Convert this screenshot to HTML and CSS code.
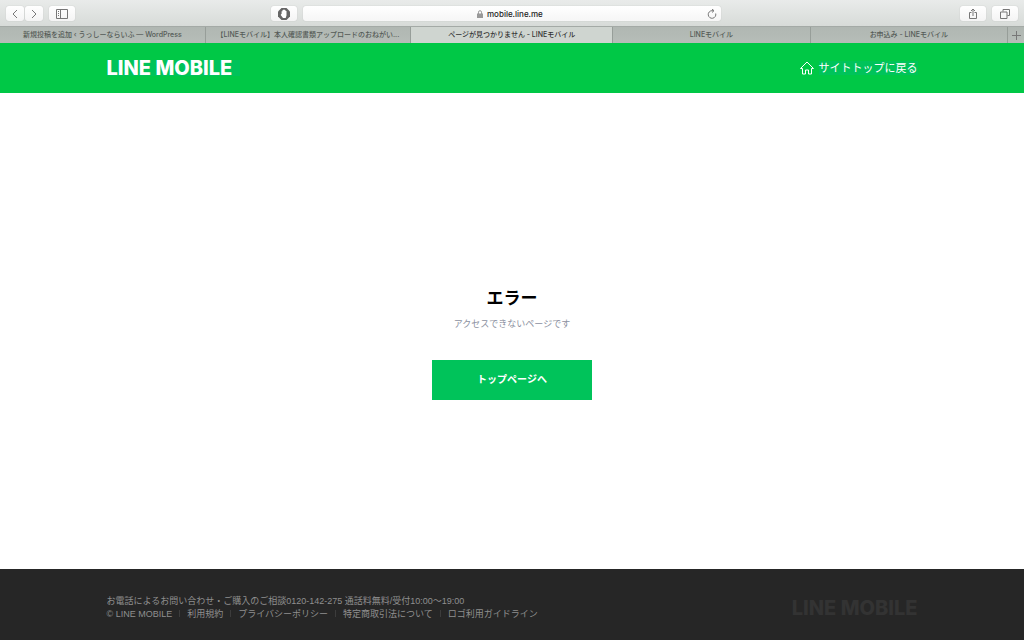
FILE: index.html
```
<!doctype html>

<html lang="ja">

<head>
	<meta charset="utf-8">
	<meta name="viewport" content="width=device-width, initial-scale=1.0">
	<title>ページが見つかりません - LINEモバイル</title>
	<link rel="stylesheet" href="styles.css">
</head>

<body>
	<div class="toolbar">
		<div class="tools">
			<div class="history">
				<button type="button" aria-label="戻る">
					<svg width="8" height="10" viewBox="0 0 8 10"><path d="M6 1 2 5l4 4" /></svg>
				</button>
				<button type="button" aria-label="進む">
					<svg width="8" height="10" viewBox="0 0 8 10"><path d="m2 1 4 4-4 4" /></svg>
				</button>
			</div>
			<button type="button" aria-label="サイドバー">
				<svg width="12" height="10" viewBox="0 0 12 10"><path d="M.5.5h11v9H.5zM4.500.5v9M2 2.500h1M2 4.500h1M2 6.500h1" /></svg>
			</button>
			<button type="button" class="blocker" aria-label="広告ブロック">
				<svg width="12" height="12" viewBox="0 0 12 12">
					<path class="solid" d="M3.500 0h5L12 3.500v5L8.500 12h-5L0 8.500v-5z" />
					<path class="hand" d="M3.600 6V3.200h.9V2h1V1.500h1V2h1v1h1v4.500L7.700 10H5L2.700 7l.5-.9z" />
				</svg>
			</button>
		</div>
		<div class="address">
			<label class="lock" for="url" aria-label="アドレス">
				<svg width="6" height="8" viewBox="0 0 6 8"><path d="M1.500 4V2.200a1.500 1.500 0 0 1 3 0V4" /><path class="solid" d="M0 3.500h6V8H0z" /></svg>
			</label>
			<input id="url" type="text" value="mobile.line.me">
			<button type="button" class="reload" aria-label="再読み込み">
				<svg width="10" height="10" viewBox="0 0 10 10"><path d="M8.700 4.500A3.800 3.800 0 1 1 5 1.700h1.500M5 0l2 1.700-2 1.800" /></svg>
			</button>
		</div>
		<div class="tools tools-right">
			<button type="button" aria-label="共有">
				<svg width="10" height="12" viewBox="0 0 10 12"><path d="M3.500 4.500h-2v6h7v-6h-2M5 8V1M3 3l2-2 2 2" /></svg>
			</button>
			<button type="button" aria-label="タブ一覧">
				<svg width="10" height="10" viewBox="0 0 10 10"><path d="M3 2.500v-2h6.500v6h-2M.5 3h6.500v6.500H.5z" /></svg>
			</button>
		</div>
	</div>

	<nav class="tabs">
		<a class="tab wide" href="#">新規投稿を追加 ‹ うっしーならいふ — WordPress</a>
		<a class="tab wide" href="#">【LINEモバイル】本人確認書類アップロードのおねがい...</a>
		<a class="tab active" href="#">ページが見つかりません - LINEモバイル</a>
		<a class="tab" href="#">LINEモバイル</a>
		<a class="tab" href="#">お申込み - LINEモバイル</a>
		<button type="button" class="new-tab" aria-label="新規タブ">
			<svg width="9" height="9" viewBox="0 0 9 9"><path d="M4.500 0v9M0 4.500h9" /></svg>
		</button>
	</nav>

	<header class="header">
		<div class="container">
			<a class="logo" href="#">LINE MOBILE</a>
			<a class="home" href="#">
				<svg width="14" height="14" viewBox="0 0 14 14"><path d="M.5 7.500 7 1l6.500 6.500h-2v5.500h-3V9h-3v4h-3V7.500z" /></svg>
				<span>サイトトップに戻る</span>
			</a>
		</div>
	</header>

	<main class="error">
		<h1>エラー</h1>
		<p>アクセスできないページです</p>
		<a class="btn" href="#">トップページへ</a>
	</main>

	<footer class="footer">
		<div class="container">
			<div>
				<p>お電話によるお問い合わせ・ご購入のご相談0120-142-275 通話料無料/受付10:00〜19:00</p>
				<ul>
					<li>© LINE MOBILE</li>
					<li><a href="#">利用規約</a></li>
					<li><a href="#">プライバシーポリシー</a></li>
					<li><a href="#">特定商取引法について</a></li>
					<li><a href="#">ロゴ利用ガイドライン</a></li>
				</ul>
			</div>
			<span class="logo">LINE MOBILE</span>
		</div>
	</footer>
</body>

</html>
```
FILE: styles.css
```
html {
	box-sizing: border-box;
	font-family: "Liberation Sans", "Noto Sans CJK JP", sans-serif;
}

*,
*:before,
*:after {
	box-sizing: inherit;
}

body,
h1,
p,
ul {
	margin: 0;
	padding: 0;
}

body {
	display: flex;
	flex-direction: column;
	min-height: 100vh;
	background: #fff;
}

a {
	color: inherit;
	text-decoration: none;
}

button {
	display: flex;
	align-items: center;
	justify-content: center;
	padding: 0;
	border: 0;
	background: none;
	color: #777;
}

svg {
	display: block;
	flex-shrink: 0;
	fill: none;
	stroke: currentColor;
}

svg .solid {
	fill: currentColor;
	stroke: none;
}

/* browser bar */
.toolbar {
	display: grid;
	grid-template-columns: 291fr 418fr 291fr;
	gap: 6px;
	align-items: center;
	height: 26px;
	padding: 1px 6px 0;
	background: linear-gradient(#e9ebea, #d7dbd8);
}

.tools {
	display: flex;
	gap: 6px;
}

.tools button {
	width: 26px;
	height: 15px;
	border-radius: 3px;
	background: linear-gradient(#fff, #f4f4f4);
	box-shadow: 0 0 1px #aaa;
}

.tools .history {
	display: flex;
	gap: 1px;
}

.tools .history button {
	width: 18px;
}

.tools .blocker {
	margin-left: auto;
	color: #666;
}

.blocker .hand {
	fill: #fff;
	stroke: none;
}

.tools-right {
	justify-content: flex-end;
}

.address {
	display: grid;
	grid-template-columns: 1fr auto 1fr;
	align-items: center;
	gap: 4px;
	height: 15px;
	padding: 0 4px 0 14px;
	border-radius: 3px;
	background: linear-gradient(#fff, #f6f6f6);
	box-shadow: 0 0 1px #aaa;
}

.address input {
	width: 60px;
	padding: 0;
	border: 0;
	outline: 0;
	background: none;
	color: #222;
	font: 500 8px Inter, sans-serif;
}

.lock {
	justify-self: end;
	color: #999;
}

.reload {
	justify-self: end;
}

.tabs {
	display: flex;
	height: 17px;
	border-top: 1px solid #a4aaa6;
	background: linear-gradient(#b0b7b2, #b6bdb8);
	color: #555b57;
	font: 500 7px/16px Inter, "Noto Sans CJK JP", sans-serif;
}

.tab {
	flex: 197 1 0;
	min-width: 0;
	padding: 0 8px;
	border-right: 1px solid #979e99;
	overflow: hidden;
	text-align: center;
	text-overflow: ellipsis;
	white-space: nowrap;
}

.tab.wide {
	flex-grow: 206;
}

.tab.active {
	flex-grow: 202;
	background: #cfd5d0;
	color: #333;
}

.new-tab {
	width: 16px;
}

/* page */
.container {
	display: flex;
	align-items: center;
	justify-content: space-between;
	width: 100%;
	max-width: 843px;
	margin: 0 auto;
	padding: 0 16px;
}

.logo {
	font: 800 20px/16px Inter, sans-serif;
}

.header {
	display: flex;
	height: 50px;
	background: #00c846;
	color: #fff;
}

.header .logo {
	padding-right: 8px;
	background: #00c35a;
}

.home {
	display: flex;
	align-items: center;
	gap: 5px;
	font-size: 11px;
	line-height: 14px;
}

.home span {
	background: #00c35a;
}

.error {
	display: flex;
	flex: 1;
	flex-direction: column;
	align-items: center;
	justify-content: center;
	padding-top: 24px;
}

.error h1 {
	color: #000;
	font-size: 17px;
	line-height: 26px;
}

.error p {
	margin: 5px 0 29px;
	color: #8b90a0;
	font-size: 9px;
	line-height: 14px;
}

.btn {
	width: 160px;
	background: #00c35a;
	color: #fff;
	font-size: 10px;
	font-weight: bold;
	line-height: 40px;
	text-align: center;
}

.footer {
	padding: 26px 0 19px;
	background: #262626;
	color: #8f8f8f;
	font-size: 9px;
	line-height: 13px;
}

.footer ul {
	display: flex;
	list-style: none;
}

.footer li + li:before {
	content: "";
	display: inline-block;
	width: 1px;
	height: 7px;
	margin: 0 7px;
	background: #3c3c3c;
}

.footer .logo {
	color: #333;
}
```
